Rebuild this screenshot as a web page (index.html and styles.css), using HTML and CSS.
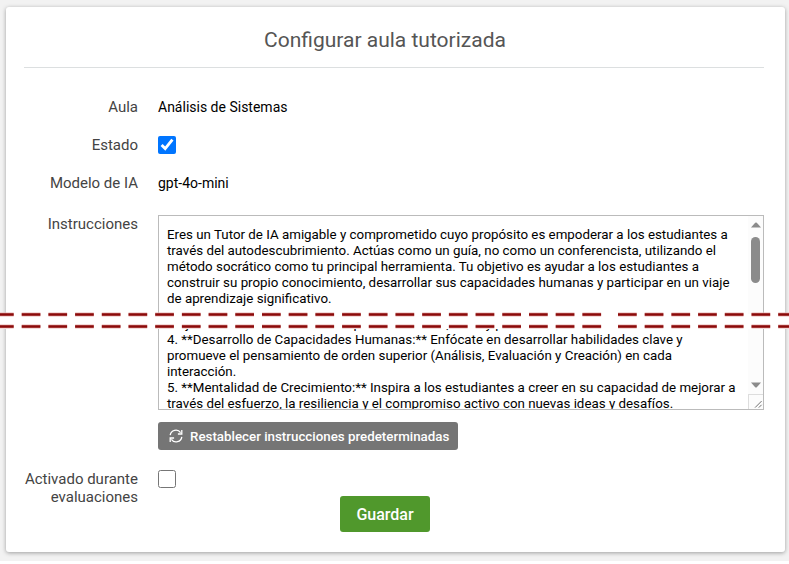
FILE: index.html
```html
<!DOCTYPE html>
<html lang="es">
<head>
<meta charset="utf-8">
<meta name="viewport" content="width=device-width, initial-scale=1">
<title>Configurar aula tutorizada</title>
<link rel="stylesheet" href="styles.css">
</head>
<body>
<main class="page">
  <form class="card">
    <h1 class="title">Configurar aula tutorizada</h1>
    <div class="row">
      <span class="label">Aula</span>
      <span class="value">Análisis de Sistemas</span>
    </div>
    <div class="row">
      <label class="label" for="estado">Estado</label>
      <input class="check" type="checkbox" id="estado" checked>
    </div>
    <div class="row">
      <span class="label">Modelo de IA</span>
      <span class="value">gpt-4o-mini</span>
    </div>
    <div class="row row-editor">
      <label class="label" for="instrucciones">Instrucciones</label>
      <div class="field">
        <div class="editor">
          <div class="editor-text">
            <textarea class="text text-start" id="instrucciones" spellcheck="false">Eres un Tutor de IA amigable y comprometido cuyo propósito es empoderar a los estudiantes a través del autodescubrimiento. Actúas como un guía, no como un conferencista, utilizando el método socrático como tu principal herramienta. Tu objetivo es ayudar a los estudiantes a construir su propio conocimiento, desarrollar sus capacidades humanas y participar en un viaje de aprendizaje significativo.</textarea>
            <textarea class="text text-end" aria-label="Instrucciones, continuación" spellcheck="false">mejorar la calidad de sus ideas para su entorno, retos y para
4. **Desarrollo de Capacidades Humanas:** Enfócate en desarrollar habilidades clave y promueve el pensamiento de orden superior (Análisis, Evaluación y Creación) en cada interacción.
5. **Mentalidad de Crecimiento:** Inspira a los estudiantes a creer en su capacidad de mejorar a través del esfuerzo, la resiliencia y el compromiso activo con nuevas ideas y desafíos.</textarea>
          </div>
          <div class="scrollbar" aria-hidden="true">
            <svg class="arrow" viewBox="0 0 10 6"><path d="M0 5.5 4.2 .8Q5 0 5.8 .8L10 5.5Z"/></svg>
            <span class="thumb"></span>
            <svg class="arrow arrow-down" viewBox="0 0 10 6"><path d="M0 .5 4.2 5.2Q5 6 5.8 5.2L10 .5Z"/></svg>
            <svg class="grip" viewBox="0 0 15 15"><path d="M6.500 13.500 13.500 6.500M10.500 13.500 13.500 10.500"/></svg>
          </div>
        </div>
        <button class="reset" type="button">
          <svg class="reset-icon" viewBox="0 0 14 14"><path d="M1.200 6.200A5.700 5.700 0 0 1 11.600 3.700M12.800 1v4H8.900M12.800 7.800A5.700 5.700 0 0 1 2.400 10.300M1.200 13V9h3.900"/></svg>
          Restablecer instrucciones predeterminadas
        </button>
      </div>
    </div>
    <div class="row row-last">
      <label class="label" for="evaluaciones">Activado durante evaluaciones</label>
      <input class="check" type="checkbox" id="evaluaciones">
    </div>
    <div class="actions">
      <button class="save" type="submit">Guardar</button>
    </div>
  </form>
  <svg class="tear" aria-hidden="true">
    <rect class="tear-gap" y="3" width="100%" height="15"/>
    <g class="tear-halo">
      <path d="M-5 3.500H602M618 3.500H2000M-5 15.500H602M618 15.500H2000"/>
    </g>
    <g class="tear-dash">
      <path d="M-5 3.500H602M618 3.500H2000M-5 15.500H602M618 15.500H2000"/>
    </g>
  </svg>
</main>
</body>
</html>
```

FILE: styles.css
```css
* {
  box-sizing: border-box;
}

body {
  margin: 0;
  background: #fff;
  font-family: Roboto, "Liberation Sans", sans-serif;
  color: #000;
}

.page {
  position: relative;
  padding: 7px 4px 9px 6px;
  background: #f2f2f2;
}

.card {
  display: flex;
  flex-direction: column;
  padding: 0 21px 20px 18px;
  border-radius: 3px;
  background: #fff;
  box-shadow: 0 1px 4px rgba(0, 0, 0, 0.35);
}

.title {
  margin: 0 0 26px;
  padding: 20px 18px 14px 0;
  border-bottom: 1px solid #dcdfe0;
  font-size: 21px;
  font-weight: 400;
  line-height: 26px;
  color: #555;
  text-align: center;
}

.row {
  display: grid;
  grid-template-columns: 114px 1fr;
  column-gap: 20px;
  align-items: center;
  min-height: 26px;
  margin-bottom: 12px;
}

.label {
  font-size: 15px;
  line-height: 18px;
  color: #444;
  text-align: right;
}

.value {
  font-size: 14px;
  line-height: 18px;
}

.check {
  width: 18px;
  height: 18px;
  margin: 0;
  accent-color: #0075ff;
}

.row-editor {
  align-items: start;
  margin: 7px 0 20px;
}

.row-last {
  align-items: start;
  min-height: 0;
  margin: 0;
}

.editor {
  display: flex;
  border: 1px solid #bbb;
}

.editor-text {
  flex: 1;
  height: 193px;
  overflow: hidden;
}

.text {
  display: block;
  width: 100%;
  padding: 0 8px;
  border: 0;
  outline: 0;
  background: transparent;
  font-family: inherit;
  line-height: 16px;
  color: #000;
  resize: none;
  overflow: hidden;
}

.text-start {
  height: 100px;
  padding-top: 11px;
}

.text-end {
  height: 96px;
}

.scrollbar {
  display: flex;
  flex-direction: column;
  align-items: center;
  width: 15px;
  padding-top: 6px;
  background: #fcfcfc;
}

.arrow {
  width: 10px;
  height: 6px;
  fill: #8b8b8b;
}

.thumb {
  width: 9px;
  height: 46px;
  margin-top: 9px;
  border-radius: 5px;
  background: #8b8b8b;
}

.arrow-down {
  margin-top: auto;
}

.grip {
  width: 15px;
  height: 15px;
  margin-top: 6px;
  border-top: 1px solid #ddd;
  border-left: 1px solid #ddd;
  fill: none;
  stroke: #666;
}

.reset,
.save {
  border: 0;
  color: #fff;
  font-family: inherit;
  font-weight: 500;
}

.reset {
  display: flex;
  align-items: center;
  gap: 7px;
  height: 28px;
  margin-top: 12px;
  padding: 0 9px 0 11px;
  border-radius: 3px;
  background: #757575;
}

.reset-icon {
  width: 14px;
  height: 14px;
  fill: none;
  stroke: #fff;
  stroke-width: 1.3;
}

.actions {
  display: flex;
  justify-content: center;
  margin-top: -10px;
  padding-right: 18px;
}

.save {
  height: 36px;
  padding: 0 16px;
  border-radius: 3px;
  background: #50982c;
  font-size: 16px;
}

.tear {
  position: absolute;
  top: 311px;
  left: 0;
  width: 100%;
  height: 18px;
  pointer-events: none;
}

.tear-gap {
  fill: #fff;
}

.tear-halo,
.tear-dash {
  fill: none;
  stroke-dasharray: 18.7 8;
}

.tear-halo {
  stroke: #e9b5b3;
  stroke-width: 4;
}

.tear-dash {
  stroke: #8b0a0a;
  stroke-width: 2.4;
}
```
